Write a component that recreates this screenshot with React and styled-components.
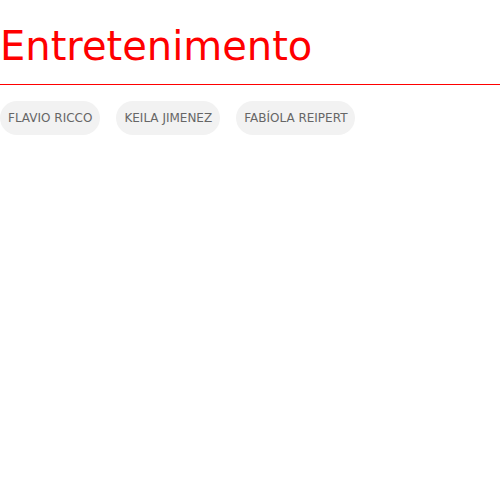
import React from "react";
import styled, { createGlobalStyle } from "styled-components";

const GlobalStyle = createGlobalStyle`
  body {
    margin: 0;
    background: #fff;
    font-family: "DejaVu Sans", sans-serif;
  }
`;

const Page = styled.div`
  width: 500px;
`;

const Title = styled.h1`
  margin: 0;
  padding: 23px 0 14px;
  font-size: 40px;
  font-weight: normal;
  line-height: 47px;
  color: #ff0000;
  border-bottom: 1px solid #ff0000;
`;

const Tags = styled.div`
  display: flex;
  gap: 16px;
  margin-top: 16px;
`;

const Tag = styled.span`
  display: inline-block;
  padding: 10px 8px;
  font-size: 12px;
  line-height: 14px;
  color: #666;
  background: #f2f2f2;
  border-radius: 17px;
`;

const authors = ["FLAVIO RICCO", "KEILA JIMENEZ", "FABÍOLA REIPERT"];

const App = () => (
  <Page>
    <GlobalStyle />
    <Title>Entretenimento</Title>
    <Tags>
      {authors.map((a) => (
        <Tag key={a}>{a}</Tag>
      ))}
    </Tags>
  </Page>
);

export default App;
